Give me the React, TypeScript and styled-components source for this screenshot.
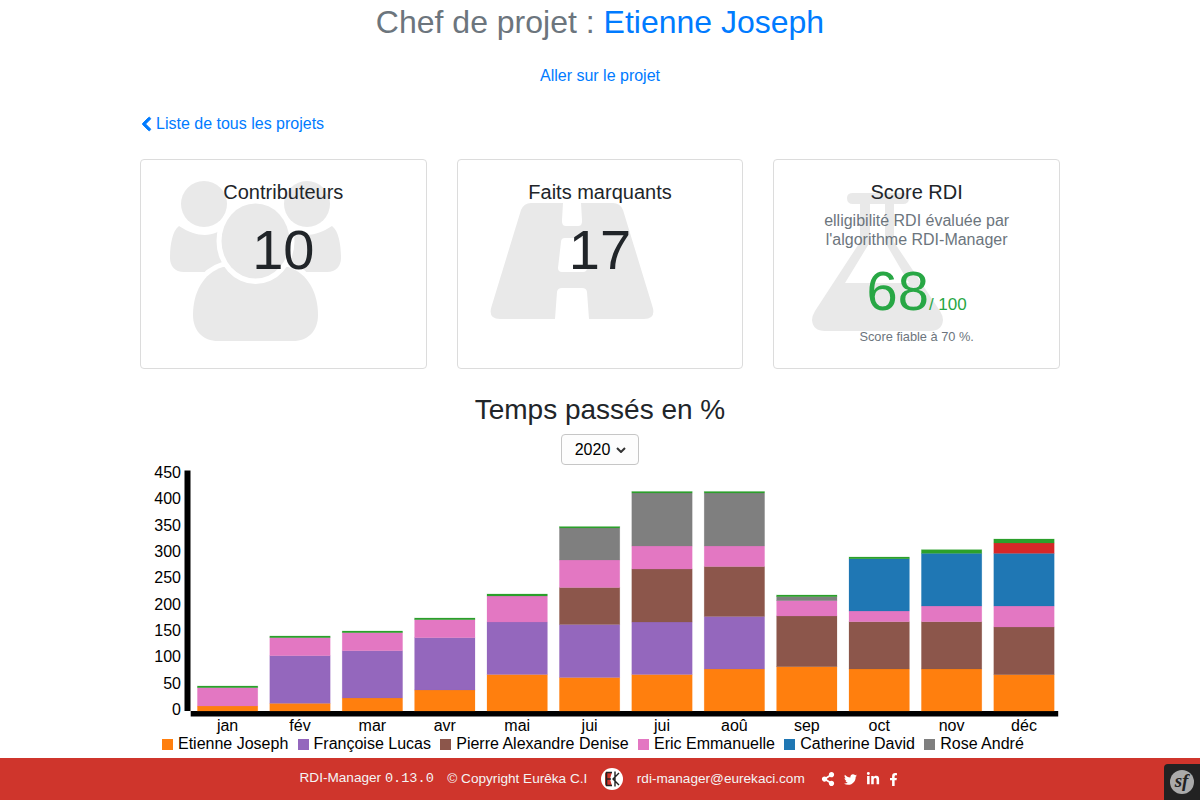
import React from 'react';
import styled, {createGlobalStyle} from 'styled-components';
import {FaChevronLeft, FaShareAlt, FaTwitter, FaLinkedinIn, FaFacebookF} from 'react-icons/fa';

const GlobalStyle = createGlobalStyle`
  html, body {
    margin: 0;
    height: 100%;
  }
  body {
    font-family: "Liberation Sans", Arial, sans-serif;
    font-size: 16px;
    line-height: 1.5;
    color: #212529;
    background: #fff;
  }
  a {
    color: #007bff;
    text-decoration: none;
  }
`

const series = {
    orange: '#ff7f0e',
    purple: '#9467bd',
    brown: '#8c564b',
    pink: '#e377c2',
    blue: '#1f77b4',
    gray: '#7f7f7f',
    red: '#d62728',
    green: '#2ca02c',
}
type SeriesName = keyof typeof series

const legend: {name: string, color: SeriesName}[] = [
    {name: 'Etienne Joseph', color: 'orange'},
    {name: 'Françoise Lucas', color: 'purple'},
    {name: 'Pierre Alexandre Denise', color: 'brown'},
    {name: 'Eric Emmanuelle', color: 'pink'},
    {name: 'Catherine David', color: 'blue'},
    {name: 'Rose André', color: 'gray'},
]

// upper edge of every stacked segment, as a y coordinate on the page
const months: {label: string, tops: [SeriesName, number][]}[] = [
    {label: 'jan', tops: [['orange', 706], ['pink', 687.7], ['green', 686]]},
    {label: 'fév', tops: [['orange', 703.3], ['purple', 655.7], ['pink', 637.7], ['green', 636]]},
    {label: 'mar', tops: [['orange', 698], ['purple', 650.7], ['pink', 632.7], ['green', 631]]},
    {label: 'avr', tops: [['orange', 690], ['purple', 637.7], ['pink', 619.7], ['green', 618]]},
    {label: 'mai', tops: [['orange', 674.5], ['purple', 622], ['pink', 596], ['green', 594]]},
    {label: 'jui', tops: [['orange', 677.5], ['purple', 624.5], ['brown', 587.5], ['pink', 560], ['gray', 528], ['green', 526.6]]},
    {label: 'jui', tops: [['orange', 674.5], ['purple', 622], ['brown', 569], ['pink', 546], ['gray', 493], ['green', 491.5]]},
    {label: 'aoû', tops: [['orange', 669], ['purple', 616.5], ['brown', 566.5], ['pink', 546], ['gray', 493], ['green', 491.5]]},
    {label: 'sep', tops: [['orange', 666.7], ['brown', 616], ['pink', 600.7], ['gray', 596.7], ['green', 595]]},
    {label: 'oct', tops: [['orange', 669], ['brown', 621.7], ['pink', 611], ['blue', 558.8], ['green', 557]]},
    {label: 'nov', tops: [['orange', 669], ['brown', 621.7], ['pink', 606], ['blue', 553.3], ['green', 549.7]]},
    {label: 'déc', tops: [['orange', 674.7], ['brown', 627], ['pink', 606], ['blue', 553.3], ['red', 543], ['green', 539]]},
]

const ticks = [450, 400, 350, 300, 250, 200, 150, 100, 50, 0]

const UsersIcon = () => (
    <Watermark $left={29} $top={21} width="173" height="161" viewBox="0 0 173 161">
        <circle cx="34" cy="23" r="23"/>
        <circle cx="137" cy="23" r="23"/>
        <path d="M9 45 C18 51 27 54 35 54 C43 54 50 50 58 45 L72 91 L14 91 C5 91 0 85 0 77 C0 65 2 50 9 45 Z"/>
        <path d="M162 45 C153 51 144 54 136 54 C128 54 121 50 113 45 L99 91 L157 91 C166 91 171 85 171 77 C171 65 169 50 162 45 Z"/>
        <HaloShape d="M53 86 C33 92 23 112 23 134 C23 150 33 160 48 160 L123 160 C138 160 148 150 148 134 C148 112 138 92 118 86 Z"/>
        <HeadRing cx="85.500" cy="60" rx="39" ry="43"/>
        <ellipse cx="85.500" cy="60" rx="34" ry="37.500"/>
    </Watermark>
)

const RoadIcon = () => (
    <Watermark $left={32} $top={43} width="164" height="116" viewBox="0 0 164 116">
        <path fillRule="evenodd" d="M41 0 L73 0 L72 17 Q71.5 23 76 23 L88 23 Q92.5 23 92 17 L91 0 L123 0 Q130 0 133 7 L162 102 Q167 116 154 116 L99 116 L97 89 Q96.5 85 92 85 L72 85 Q67.5 85 67 89 L65 116 L10 116 Q-3 116 2 102 L31 7 Q34 0 41 0 Z M75 35 Q71 35 71 39 L68 65 Q68 69 72 69 L93 69 Q97 69 97 65 L94 39 Q94 35 90 35 Z"/>
    </Watermark>
)

const FlaskIcon = () => (
    <Watermark $left={38} $top={33} width="131" height="138" viewBox="0 0 131 138">
        <path fillRule="evenodd" d="M41 0 L91 0 Q97 0 97 5 Q97 11 91 11 L82 11 L82 49 L128 118 Q131 123 131 127 Q130 138 118 138 L13 138 Q1 138 0 127 Q0 123 3 118 L48 49 L48 11 L41 11 Q35 11 35 5 Q35 0 41 0 Z M58 11 L58 49 L33 90 L97 90 L73 49 L73 11 Z"/>
    </Watermark>
)

export default function App() {
    const barLeft = (i: number) => 197.4 + i * 72.4

    return (
        <>
            <GlobalStyle/>
            <Page>
                <Main>
                    <Title>Chef de projet : <a href="#">Etienne Joseph</a></Title>
                    <ProjectLink href="#">Aller sur le projet</ProjectLink>
                    <BackLink href="#"><FaChevronLeft/>Liste de tous les projets</BackLink>
                    <Cards>
                        <Card>
                            <UsersIcon/>
                            <CardTitle>Contributeurs</CardTitle>
                            <BigNumber>10</BigNumber>
                        </Card>
                        <Card>
                            <RoadIcon/>
                            <CardTitle>Faits marquants</CardTitle>
                            <BigNumber>17</BigNumber>
                        </Card>
                        <Card>
                            <FlaskIcon/>
                            <CardTitle>Score RDI</CardTitle>
                            <CardSubtitle>elligibilité RDI évaluée par<br/>l'algorithme RDI-Manager</CardSubtitle>
                            <Score>68<ScoreMax>/ 100</ScoreMax></Score>
                            <ScoreNote>Score fiable à 70 %.</ScoreNote>
                        </Card>
                    </Cards>
                    <ChartTitle>Temps passés en %</ChartTitle>
                    <YearButton>2020<Caret width="10" height="6" viewBox="0 0 10 6"><path d="M1 1 L5 5 L9 1" fill="none" stroke="#333" strokeWidth="2"/></Caret></YearButton>
                    <Chart viewBox="140 465 920 270" width="920" height="270">
                        {ticks.map((tick, i) => (
                            <AxisText key={tick} x={181} y={478 + i * 26.33} textAnchor="end">{tick}</AxisText>
                        ))}
                        <rect x="184.5" y="470.5" width="6" height="240.5" fill="#000"/>
                        <rect x="190.7" y="711" width="867.5" height="5.5" fill="#000"/>
                        {months.map((month, i) => month.tops.map(([color, top], j) => {
                            const bottom = j === 0 ? 711 : month.tops[j - 1][1]
                            return (
                                <rect
                                    key={color}
                                    x={barLeft(i)}
                                    y={top}
                                    width={60.4}
                                    height={bottom - top}
                                    fill={series[color]}
                                    stroke={series[color]}
                                    strokeOpacity={0.35}
                                    strokeWidth={0.6}
                                />
                            )
                        }))}
                        {months.map((month, i) => (
                            <AxisText key={i} x={barLeft(i) + 30.2} y={731} textAnchor="middle">{month.label}</AxisText>
                        ))}
                    </Chart>
                    <Legend>
                        {legend.map(item => (
                            <LegendItem key={item.name}>
                                <Swatch $color={series[item.color]}/>{item.name}
                            </LegendItem>
                        ))}
                    </Legend>
                </Main>
                <Footer>
                    <span>RDI-Manager <Version>0.13.0</Version></span>
                    <Copyright>© Copyright Eurêka C.I</Copyright>
                    <Logo width="22" height="22" viewBox="0 0 22 22">
                        <circle cx="11" cy="11" r="11" fill="#fff"/>
                        <path d="M4 6 Q4 4 6 4 L11 4 L9 11 L11 18 L6 18 Q4 18 4 16 Z" fill="#cf352c"/>
                        <path d="M5 4.5 L11 4.5 M5 11 L10 11 M5 17.5 L11 17.5 M5.5 4.5 L5.5 17.5" fill="none" stroke="#222" strokeWidth="1.6"/>
                        <path d="M14 3.5 L14 18.5 M18 5 L12 11 L18 17" fill="none" stroke="#222" strokeWidth="1.4"/>
                    </Logo>
                    <Mail>rdi-manager@eurekaci.com</Mail>
                    <Socials>
                        <FaShareAlt size={14}/>
                        <FaTwitter size={13}/>
                        <FaLinkedinIn size={14}/>
                        <FaFacebookF size={13}/>
                    </Socials>
                    <DebugBar>
                        <svg width="24" height="24" viewBox="0 0 24 24">
                            <circle cx="12" cy="12" r="12" fill="#aaa"/>
                            <SfMark x="11.5" y="17" textAnchor="middle">sf</SfMark>
                        </svg>
                    </DebugBar>
                </Footer>
            </Page>
        </>
    )
}

const Page = styled.div`
  display: flex;
  flex-direction: column;
  height: 800px;
  overflow: hidden;
`
const Main = styled.main`
  flex: 1;
  width: 920px;
  margin: 0 auto;
  display: flex;
  flex-direction: column;
  align-items: center;
`
const Title = styled.h2`
  margin: 3px 0 0;
  font-size: 32px;
  font-weight: 400;
  line-height: 38px;
  color: #6c757d;
`
const ProjectLink = styled.a`
  margin-top: 23px;
`
const BackLink = styled.a`
  align-self: flex-start;
  margin-top: 24px;
  display: flex;
  align-items: center;
  gap: 3px;
  svg {
    width: 13px;
    height: 16px;
    stroke: currentColor;
    stroke-width: 30;
  }
`
const Cards = styled.section`
  align-self: stretch;
  margin-top: 23px;
  display: grid;
  grid-template-columns: repeat(3, 1fr);
  column-gap: 30px;
`
const Card = styled.article`
  position: relative;
  box-sizing: border-box;
  height: 210px;
  padding: 20px 20px 0;
  border: 1px solid #dcdcdc;
  border-radius: 4px;
  text-align: center;
  overflow: hidden;
`
const Watermark = styled.svg<{$left: number, $top: number}>`
  position: absolute;
  left: ${props => props.$left}px;
  top: ${props => props.$top}px;
  fill: #e9e9e9;
`
const HaloShape = styled.path`
  stroke: #fff;
  stroke-width: 10;
  paint-order: stroke;
`
const HeadRing = styled.ellipse`
  fill: #fff;
`
const CardTitle = styled.h5`
  position: relative;
  margin: 0;
  font-size: 20px;
  font-weight: 400;
  line-height: 24px;
`
const BigNumber = styled.div`
  position: relative;
  font-size: 56px;
  font-weight: 300;
  line-height: 67px;
  margin-top: 12px;
`
const CardSubtitle = styled.h6`
  position: relative;
  margin: 7px 0 0;
  font-size: 16px;
  font-weight: 400;
  line-height: 19px;
  color: #6c757d;
`
const Score = styled.div`
  position: relative;
  margin-top: 19px;
  font-size: 56px;
  line-height: 45px;
  color: #28a745;
`
const ScoreMax = styled.span`
  font-size: 17px;
`
const ScoreNote = styled.div`
  position: relative;
  font-size: 12.8px;
  line-height: 19px;
  color: #6c757d;
`
const ChartTitle = styled.h3`
  margin: 24px 0 0;
  font-size: 28px;
  font-weight: 400;
  line-height: 34px;
`
const YearButton = styled.button`
  box-sizing: border-box;
  width: 78px;
  height: 31px;
  margin-top: 7px;
  display: flex;
  align-items: center;
  justify-content: center;
  gap: 6px;
  padding: 0 0 0 1px;
  font: inherit;
  color: #000;
  background: #fdfdfd;
  border: 1px solid #c6c6c6;
  border-radius: 4px;
`
const Caret = styled.svg`
  display: block;
`
const Chart = styled.svg`
  display: block;
  flex: none;
`
const AxisText = styled.text`
  font-size: 16px;
  fill: #000;
`
const Legend = styled.div`
  align-self: flex-start;
  margin-left: 22px;
  display: flex;
  gap: 9.25px;
  font-size: 16px;
  line-height: 18px;
  color: #000;
`
const LegendItem = styled.span`
  display: flex;
  align-items: center;
  gap: 5px;
`
const Swatch = styled.i<{$color: string}>`
  width: 11px;
  height: 11px;
  background: ${props => props.$color};
`
const Footer = styled.footer`
  position: relative;
  flex: none;
  height: 42px;
  display: flex;
  align-items: center;
  padding-left: 299.5px;
  background: #cf352c;
  color: #f4f4f4;
  font-size: 13.6px;
`
const Version = styled.code`
  font-family: "Liberation Mono", monospace;
  font-size: 13.6px;
`
const Copyright = styled.span`
  margin-left: 13.5px;
`
const Logo = styled.svg`
  margin-left: 14px;
`
const Mail = styled.span`
  margin-left: 13.5px;
`
const Socials = styled.span`
  margin-left: 16.5px;
  display: flex;
  align-items: center;
  gap: 9px;
  color: #fff;
  svg:last-child {
    margin-left: -2px;
  }
`
const DebugBar = styled.div`
  position: absolute;
  right: 0;
  bottom: 0;
  width: 36px;
  height: 36px;
  display: flex;
  align-items: center;
  justify-content: center;
  background: #222;
  border-top-left-radius: 4px;
`
const SfMark = styled.text`
  font-family: "Liberation Serif", serif;
  font-style: italic;
  font-weight: 700;
  font-size: 19px;
  fill: #222;
`
